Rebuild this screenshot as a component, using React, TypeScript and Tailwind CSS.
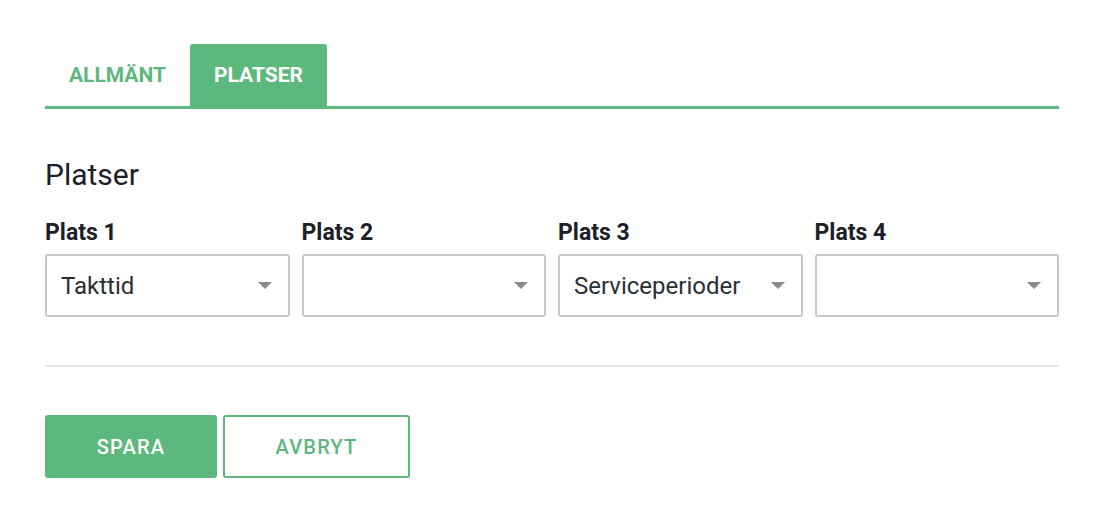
const fields = [
  { label: "Plats 1", value: "Takttid" },
  { label: "Plats 2", value: "" },
  { label: "Plats 3", value: "Serviceperioder" },
  { label: "Plats 4", value: "" },
];

function Caret() {
  return (
    <svg width="14" height="8" viewBox="0 0 14 8" className="shrink-0">
      <path d="M0 0 L14 0 L7 7 Z" fill="#8a8a8a" />
    </svg>
  );
}

export default function App() {
  return (
    <div className="min-h-screen bg-white px-[45px] pt-[44px] text-[#1d2127]" style={{ fontFamily: "Roboto, 'Noto Sans', sans-serif" }}>
      <div className="flex border-b-[3px] border-[#5cb87d]">
        <button className="h-[62px] w-[145px] pt-[2px] text-[21px] font-bold text-[#5cb87d]">ALLMÄNT</button>
        <button className="h-[62px] w-[137px] rounded-t-[3px] bg-[#5cb87d] pt-[2px] text-[21px] font-bold text-white">PLATSER</button>
      </div>

      <h2 className="mt-[48px] text-[30px] leading-[36px]">Platser</h2>

      <div className="mt-[26px] grid grid-cols-4 gap-[12px]">
        {fields.map((f) => (
          <div key={f.label}>
            <div className="text-[23px] font-bold leading-[28px]">{f.label}</div>
            <div className="mt-[7px] flex h-[63px] items-center justify-between rounded-[3px] border-2 border-[#c8c8c8] pl-[14px] pr-[16px] text-[24px] text-[#2b2f33]">
              <span>{f.value}</span>
              <Caret />
            </div>
          </div>
        ))}
      </div>

      <div className="mt-[48px] h-[2px] bg-[#e6e6e6]" />

      <div className="mt-[48px] flex gap-[6px]">
        <button className="h-[63px] w-[172px] rounded-[3px] bg-[#5cb87d] text-[20px] font-medium tracking-[0.06em] text-white">SPARA</button>
        <button className="h-[63px] w-[187px] rounded-[3px] border-2 border-[#5cb87d] text-[20px] font-medium tracking-[0.06em] text-[#5cb87d]">AVBRYT</button>
      </div>
    </div>
  );
}
